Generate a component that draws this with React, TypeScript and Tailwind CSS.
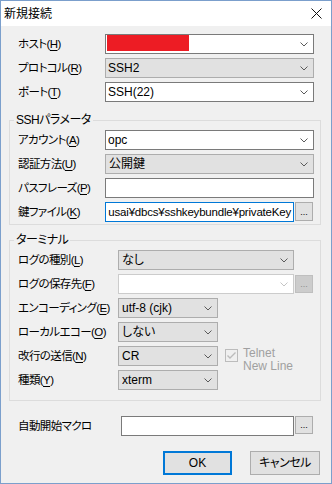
import React from "react";

function Acc({ text, k }: { text: string; k?: string }) {
  return (
    <span className="whitespace-nowrap text-[11.5px] tracking-[-0.6px]">
      {text}
      {k && (
        <>
          (<span className="underline underline-offset-[2px]">{k}</span>)
        </>
      )}
    </span>
  );
}

function Chevron({ dim }: { dim?: boolean }) {
  return (
    <svg width="8" height="5" viewBox="0 0 8 5" className="shrink-0">
      <polyline
        points="0.5,0.5 4,4 7.5,0.5"
        fill="none"
        stroke={dim ? "#c4c4c4" : "#5a5a5a"}
        strokeWidth="1"
      />
    </svg>
  );
}

type Kind = "edit" | "list" | "off";

const kindClass: Record<Kind, string> = {
  edit: "bg-white border-[#7a7a7a]",
  list: "bg-[#e1e1e1] border-[#adadad]",
  off: "bg-white border-[#cccccc]",
};

function Combo({
  kind,
  w,
  pad = "pl-[2px]",
  children,
}: {
  kind: Kind;
  w: string;
  pad?: string;
  children?: React.ReactNode;
}) {
  return (
    <div className={`flex h-5 items-center border ${kindClass[kind]} ${w} ${pad} pr-[5px]`}>
      <div className="flex h-full min-w-0 flex-1 items-center overflow-hidden whitespace-nowrap">
        {children}
      </div>
      <Chevron dim={kind === "off"} />
    </div>
  );
}

function Dots({ off, h = "h-[19px]" }: { off?: boolean; h?: string }) {
  return (
    <div
      className={`ml-[1px] flex w-[18px] items-end justify-center border pb-[3px] text-[9px] leading-none ${h} ${
        off ? "border-[#bfbfbf] bg-[#cccccc] text-[#8c8c8c]" : "border-[#adadad] bg-[#e1e1e1] text-black"
      }`}
    >
      ...
    </div>
  );
}

function Row({ label, lw, children }: { label: React.ReactNode; lw: string; children: React.ReactNode }) {
  return (
    <div className="flex h-5 items-start">
      <div className={`flex h-5 shrink-0 items-center ${lw}`}>{label}</div>
      {children}
    </div>
  );
}

function Group({ title, children, inner }: { title: string; children: React.ReactNode; inner: string }) {
  return (
    <fieldset className="ml-[8px] w-[312px] border border-[#dcdcdc]">
      <legend className="ml-[4px] px-[2px] text-[12px] leading-[14px] tracking-[-0.5px]">{title}</legend>
      <div className={`flex flex-col gap-1 pl-[8px] ${inner}`}>{children}</div>
    </fieldset>
  );
}

export default function App() {
  return (
    <div className="flex h-[484px] w-[332px] flex-col border border-[#7b9fcc] bg-[#f0f0f0] font-['Liberation_Sans','Noto_Sans_CJK_JP',sans-serif] text-[12px] leading-[14px] text-black [font-feature-settings:'palt']">
      {/* title bar */}
      <div className="flex h-[25px] shrink-0 items-center justify-between bg-white pl-[3px] pr-[9px]">
        <span className="text-[12px]">新規接続</span>
        <svg width="11" height="11" viewBox="0 0 11 11">
          <path d="M0.5 0.5 L10.5 10.5 M10.5 0.5 L0.5 10.5" stroke="#111" strokeWidth="1" />
        </svg>
      </div>

      {/* connection */}
      <div className="mt-[8px] flex flex-col gap-1 pl-[17px]">
        <Row lw="w-[87px]" label={<Acc text="ホスト" k="H" />}>
          <Combo kind="edit" w="w-[209px]" pad="pl-0">
            <div className="ml-[1px] h-[16px] w-[82px] self-start bg-[#ed1c24]" />
          </Combo>
        </Row>
        <Row lw="w-[87px]" label={<Acc text="プロトコル" k="R" />}>
          <Combo kind="list" w="w-[209px]">SSH2</Combo>
        </Row>
        <Row lw="w-[87px]" label={<Acc text="ポート" k="T" />}>
          <Combo kind="edit" w="w-[209px]">SSH(22)</Combo>
        </Row>
      </div>

      {/* ssh params */}
      <div className="mt-[11px]">
        <Group title="SSHパラメータ" inner="pt-[3px] pb-[2px]">
          <Row lw="w-[87px]" label={<Acc text="アカウント" k="A" />}>
            <Combo kind="edit" w="w-[209px]">opc</Combo>
          </Row>
          <Row lw="w-[87px]" label={<Acc text="認証方法" k="U" />}>
            <Combo kind="list" w="w-[209px]" pad="pl-[3px]">
              公開鍵
            </Combo>
          </Row>
          <Row lw="w-[87px]" label={<Acc text="パスフレーズ" k="P" />}>
            <div className="h-5 w-[209px] border border-[#7a7a7a] bg-white" />
          </Row>
          <Row lw="w-[87px]" label={<Acc text="鍵ファイル" k="K" />}>
            <div className="flex h-5 w-[189px] items-center justify-end overflow-hidden whitespace-nowrap border border-[#0078d7] bg-white pr-[2px] text-[11.5px] tracking-[-0.2px]">
              usai¥dbcs¥sshkeybundle¥privateKey
            </div>
            <Dots />
          </Row>
        </Group>
      </div>

      {/* terminal */}
      <div className="mt-[8px]">
        <Group title="ターミナル" inner="pt-[3px] pb-[10px]">
          <Row lw="w-[100px]" label={<Acc text="ログの種別" k="L" />}>
            <Combo kind="list" w="w-[176px]" pad="pl-[3px]">
              なし
            </Combo>
          </Row>
          <Row lw="w-[100px]" label={<Acc text="ログの保存先" k="F" />}>
            <Combo kind="off" w="w-[176px]" />
            <div className="pt-[1px]">
              <Dots off h="h-[18px]" />
            </div>
          </Row>
          <Row lw="w-[100px]" label={<Acc text="エンコーディング" k="E" />}>
            <Combo kind="list" w="w-[100px]" pad="pl-[3px]">
              utf-8 (cjk)
            </Combo>
          </Row>
          <Row lw="w-[100px]" label={<Acc text="ローカルエコー" k="O" />}>
            <Combo kind="list" w="w-[100px]" pad="pl-[3px]">
              しない
            </Combo>
          </Row>
          <Row lw="w-[100px]" label={<Acc text="改行の送信" k="N" />}>
            <Combo kind="list" w="w-[100px]" pad="pl-[3px]">
              CR
            </Combo>
            <div className="ml-[7px] mt-[3px] flex items-start gap-[5px]">
              <svg width="13" height="13" viewBox="0 0 13 13" className="shrink-0">
                <rect x="0.5" y="0.5" width="12" height="12" fill="#f0f0f0" stroke="#bcbcbc" />
                <polyline points="2.5,6.5 5,9 10.5,3.5" fill="none" stroke="#bcbcbc" strokeWidth="1.4" />
              </svg>
              <div className="-mt-[2px] leading-[13px] text-[#a0a0a0]">
                Telnet
                <br />
                New Line
              </div>
            </div>
          </Row>
          <Row lw="w-[100px]" label={<Acc text="種類" k="Y" />}>
            <Combo kind="list" w="w-[100px]" pad="pl-[3px]">
              xterm
            </Combo>
          </Row>
        </Group>
      </div>

      {/* macro */}
      <div className="mt-[15px] flex flex-col pl-[17px]">
        <Row lw="w-[103px]" label={<Acc text="自動開始マクロ" />}>
          <div className="h-5 w-[173px] border border-[#7a7a7a] bg-white" />
          <Dots h="h-[18px]" />
        </Row>
      </div>

      {/* buttons */}
      <div className="mt-[15px] flex justify-end gap-[18px] pr-[11px]">
        <div className="flex h-[24px] w-[69px] items-center justify-center border-2 border-[#0078d7] bg-[#e1e1e1]">
          OK
        </div>
        <div className="flex h-[24px] w-[70px] items-center justify-center border border-[#adadad] bg-[#e1e1e1] tracking-[-0.5px]">
          キャンセル
        </div>
      </div>
    </div>
  );
}
